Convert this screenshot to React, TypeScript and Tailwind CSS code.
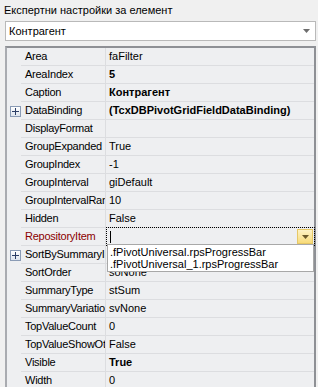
import React from 'react';

type Row = { name: string; value: string; bold?: boolean; expand?: boolean; active?: boolean };

const rows: Row[] = [
    { name: 'Area', value: 'faFilter' },
    { name: 'AreaIndex', value: '5', bold: true },
    { name: 'Caption', value: 'Контрагент', bold: true },
    { name: 'DataBinding', value: '(TcxDBPivotGridFieldDataBinding)', bold: true, expand: true },
    { name: 'DisplayFormat', value: '' },
    { name: 'GroupExpanded', value: 'True' },
    { name: 'GroupIndex', value: '-1' },
    { name: 'GroupInterval', value: 'giDefault' },
    { name: 'GroupIntervalRange', value: '10' },
    { name: 'Hidden', value: 'False' },
    { name: 'RepositoryItem', value: '', active: true },
    { name: 'SortBySummaryInfo', value: '', expand: true },
    { name: 'SortOrder', value: 'soNone' },
    { name: 'SummaryType', value: 'stSum' },
    { name: 'SummaryVariation', value: 'svNone' },
    { name: 'TopValueCount', value: '0' },
    { name: 'TopValueShowOthers', value: 'False' },
    { name: 'Visible', value: 'True', bold: true },
    { name: 'Width', value: '0' },
];

const ExpandBox = () => (
    <div className="w-[11px] h-[11px] border border-[#8a9bb5] bg-gradient-to-b from-white to-[#dde4ee] flex items-center justify-center">
        <svg width="7" height="7" viewBox="0 0 7 7">
            <path d="M0 3.5H7M3.5 0V7" stroke="#2c3e66" strokeWidth="1" />
        </svg>
    </div>
);

const DownArrow = ({ color = '#6d6d6d' }: { color?: string }) => (
    <svg width="7" height="4" viewBox="0 0 7 4">
        <path d="M0 0H7L3.5 4Z" fill={color} />
    </svg>
);

const PropRow: React.FC<{ row: Row }> = ({ row }) => (
    <div className="flex h-[18px]">
        <div className="w-[14px] shrink-0 flex items-center justify-center pl-[2px]">
            {row.expand && <ExpandBox />}
        </div>
        <div className="flex flex-1 border-b border-[#dcdde0]">
            <div className="w-[85px] shrink-0 pl-[4px] flex items-center overflow-hidden whitespace-nowrap border-r border-[#dcdde0] tracking-[-0.25px]">
                <span className={row.active ? 'text-[#8b0000]' : 'text-black'}>{row.name}</span>
            </div>
            {row.active ? (
                <div className="flex-1 flex items-center border border-dotted border-black -mt-px -mb-px -mr-px">
                    <div className="flex-1 pl-[3px] flex items-center">
                        <div className="w-px h-[12px] bg-black" />
                    </div>
                    <div className="w-[16px] h-[15px] mr-px bg-gradient-to-b from-[#fdf3c6] to-[#f8db78] border border-[#e6c867] flex items-center justify-center">
                        <DownArrow color="#6b5a2a" />
                    </div>
                </div>
            ) : (
                <div className={`flex-1 pl-[3px] flex items-center overflow-hidden whitespace-nowrap ${row.bold ? 'font-bold' : ''}`}>
                    {row.value}
                </div>
            )}
        </div>
    </div>
);

const App: React.FC = () => {
    return (
        <div className="w-[318px] h-[387px] bg-[#f0f0f0] overflow-hidden text-[11px] text-black font-['Liberation_Sans',Arial,sans-serif] leading-none">
            <div className="h-[20px] pl-[4px] pt-[5px]">Експертни настройки за елемент</div>
            <div className="mx-[5px] mt-[1px] mr-[2px] h-[20px] bg-white border border-[#b9b9b9] flex items-center">
                <span className="flex-1 pl-[3px]">Контрагент</span>
                <div className="w-[14px] flex items-center justify-center mr-[2px]">
                    <DownArrow />
                </div>
            </div>
            <div className="relative mx-[5px] mt-[5px] mr-[2px] h-[400px] bg-[#eeeff1] border-l-2 border-t-2 border-r-2 border-[#8e9095] border-l-[#a9abb0]">
                {rows.map(r => (
                    <PropRow key={r.name} row={r} />
                ))}
                <div className="absolute left-[100px] top-[196px] w-[207px] h-[28px] bg-white border border-[#a8a8a8] flex flex-col justify-center pl-[2px] gap-[1px]">
                    <div className="h-[11px] flex items-center">.fPivotUniversal.rpsProgressBar</div>
                    <div className="h-[11px] flex items-center">.fPivotUniversal_1.rpsProgressBar</div>
                </div>
            </div>
        </div>
    );
};

export default App;
